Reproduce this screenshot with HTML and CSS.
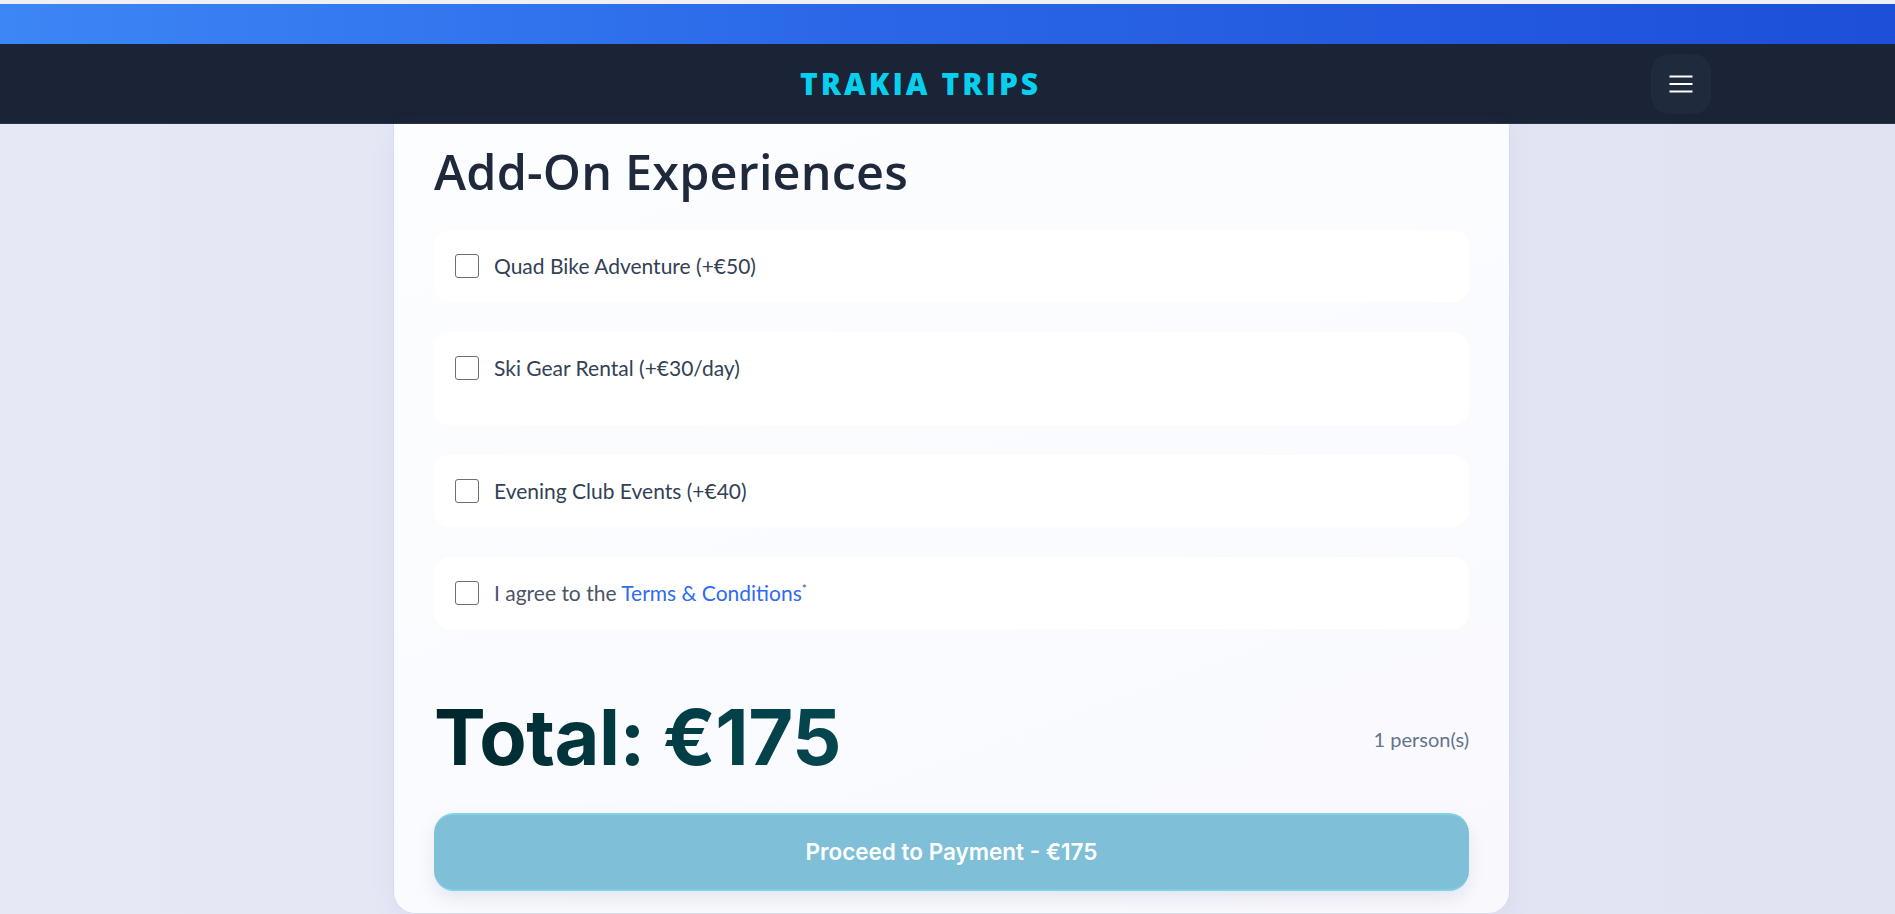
FILE: index.html
```html
<!DOCTYPE html>
<html lang="en">
<head>
<meta charset="utf-8">
<title>Trakia Trips – Add-On Experiences</title>
<link rel="stylesheet" href="styles.css">
</head>
<body>
<div class="topline"></div>
<div class="promo-bar"></div>
<header class="site-header">
  <div class="header-inner">
    <a class="logo" href="#">TRAKIA TRIPS</a>
    <button class="menu-btn" aria-label="Menu">
      <svg width="24" height="24" viewBox="0 0 24 24" fill="none" stroke="#ffffff" stroke-width="2" stroke-linecap="butt">
        <line x1="0.5" y1="4.5" x2="23.5" y2="4.5"/>
        <line x1="0.5" y1="12" x2="23.5" y2="12"/>
        <line x1="0.5" y1="19.5" x2="23.5" y2="19.5"/>
      </svg>
    </button>
  </div>
</header>
<main class="page">
  <section class="card">
    <h2 class="section-title">Add-On Experiences</h2>
    <div class="options">
      <label class="option">
        <input type="checkbox" class="check">
        <span class="option-label">Quad Bike Adventure (+€50)</span>
      </label>
      <div class="option option-tall">
        <label class="option-line">
          <input type="checkbox" class="check">
          <span class="option-label">Ski Gear Rental (+€30/day)</span>
        </label>
        <div class="option-extra"></div>
      </div>
      <label class="option">
        <input type="checkbox" class="check">
        <span class="option-label">Evening Club Events (+€40)</span>
      </label>
      <label class="option">
        <input type="checkbox" class="check">
        <span class="option-label muted">I agree to the <a href="#" class="link">Terms &amp; Conditions</a><sup class="req">*</sup></span>
      </label>
    </div>
    <div class="total-row">
      <div class="total">Total: €175</div>
      <div class="persons">1 person(s)</div>
    </div>
    <button class="pay-btn">Proceed to Payment - €175</button>
  </section>
</main>
</body>
</html>
```

FILE: styles.css
```css
* { box-sizing: border-box; }

html, body {
  margin: 0;
  padding: 0;
}

body {
  background: linear-gradient(90deg, #e6e8f6 0%, #e3e5f3 50%, #e1e3f2 100%);
  font-family: "Lato", "Open Sans", sans-serif;
  color: #334155;
  min-height: 914px;
  overflow: hidden;
}

.topline {
  height: 4px;
  background: #eef0f4;
}

.promo-bar {
  height: 40px;
  background: linear-gradient(90deg, #3d86f5 0%, #2a67e8 45%, #1d4fd8 100%);
}

.site-header {
  background: #1b2336;
  height: 80px;
  border-bottom: 1px solid #283149;
}

.header-inner {
  height: 100%;
  display: flex;
  align-items: center;
  padding: 0 184px 0 800px;
}

.logo {
  margin-right: auto;
  font-family: "Open Sans", sans-serif;
  font-weight: 800;
  font-size: 30px;
  letter-spacing: 3px;
  color: #06d0ee;
  text-decoration: none;
  line-height: 1;
}

.menu-btn {
  width: 60px;
  height: 60px;
  border: none;
  border-radius: 18px;
  background: #1f2a3d;
  display: flex;
  align-items: center;
  justify-content: center;
  padding: 0;
  cursor: pointer;
}

.page {
  display: flex;
  justify-content: center;
  padding-left: 8px;
}

.card {
  width: 1117px;
  background: linear-gradient(160deg, #fcfdff 0%, #fafbfe 60%, #f9f9fd 100%);
  border: 1px solid #d8dbed;
  border-top: none;
  border-radius: 0 0 22px 22px;
  padding: 18px 40px 22px;
  box-shadow: 0 6px 24px rgba(120, 130, 180, 0.08);
}

.section-title {
  margin: 0 0 30px;
  font-family: "Open Sans", sans-serif;
  font-weight: 600;
  font-size: 48.5px;
  line-height: 1.2;
  color: #1e293b;
  letter-spacing: 0.2px;
}

.options {
  display: flex;
  flex-direction: column;
  gap: 30px;
}

.option {
  display: flex;
  align-items: center;
  gap: 15px;
  background: #ffffff;
  border-radius: 16px;
  padding: 24px 21px;
  cursor: pointer;
}

.option-tall {
  display: block;
  padding-bottom: 24px;
}

.option-line {
  display: flex;
  align-items: center;
  gap: 15px;
  cursor: pointer;
}

.option-extra {
  height: 21px;
}

.check {
  appearance: none;
  -webkit-appearance: none;
  margin: 0;
  width: 24px;
  height: 24px;
  flex: 0 0 24px;
  border: 1.5px solid #6e6e73;
  border-radius: 3px;
  background: #ffffff;
}

.option-label {
  font-size: 21px;
  line-height: 24px;
  color: #334155;
}

.option-label.muted {
  color: #4b5567;
}

.link {
  color: #2f6bf2;
  text-decoration: none;
}

.req {
  font-size: 12px;
  color: #4b5567;
  vertical-align: top;
  position: relative;
  top: -4px;
}

.total-row {
  display: flex;
  align-items: center;
  justify-content: space-between;
  margin: 70px 0 36px;
}

.total {
  font-family: "Inter", sans-serif;
  font-weight: 700;
  font-size: 77.5px;
  line-height: 1;
  letter-spacing: -0.5px;
  background: linear-gradient(90deg, #00262c 0%, #023c43 50%, #05464e 100%);
  -webkit-background-clip: text;
  background-clip: text;
  color: transparent;
}

.persons {
  font-size: 20px;
  color: #64748b;
  padding-top: 2px;
}

.pay-btn {
  display: block;
  width: 100%;
  height: 78px;
  border: none;
  border-top: 2px solid #82d2e2;
  border-bottom: 2px solid #80d0e1;
  border-radius: 20px;
  background: #7fc0d8;
  color: #ffffff;
  font-family: "Inter", sans-serif;
  font-weight: 600;
  font-size: 22.5px;
  box-shadow: 0 8px 18px rgba(100, 110, 160, 0.14);
  cursor: pointer;
}
```
